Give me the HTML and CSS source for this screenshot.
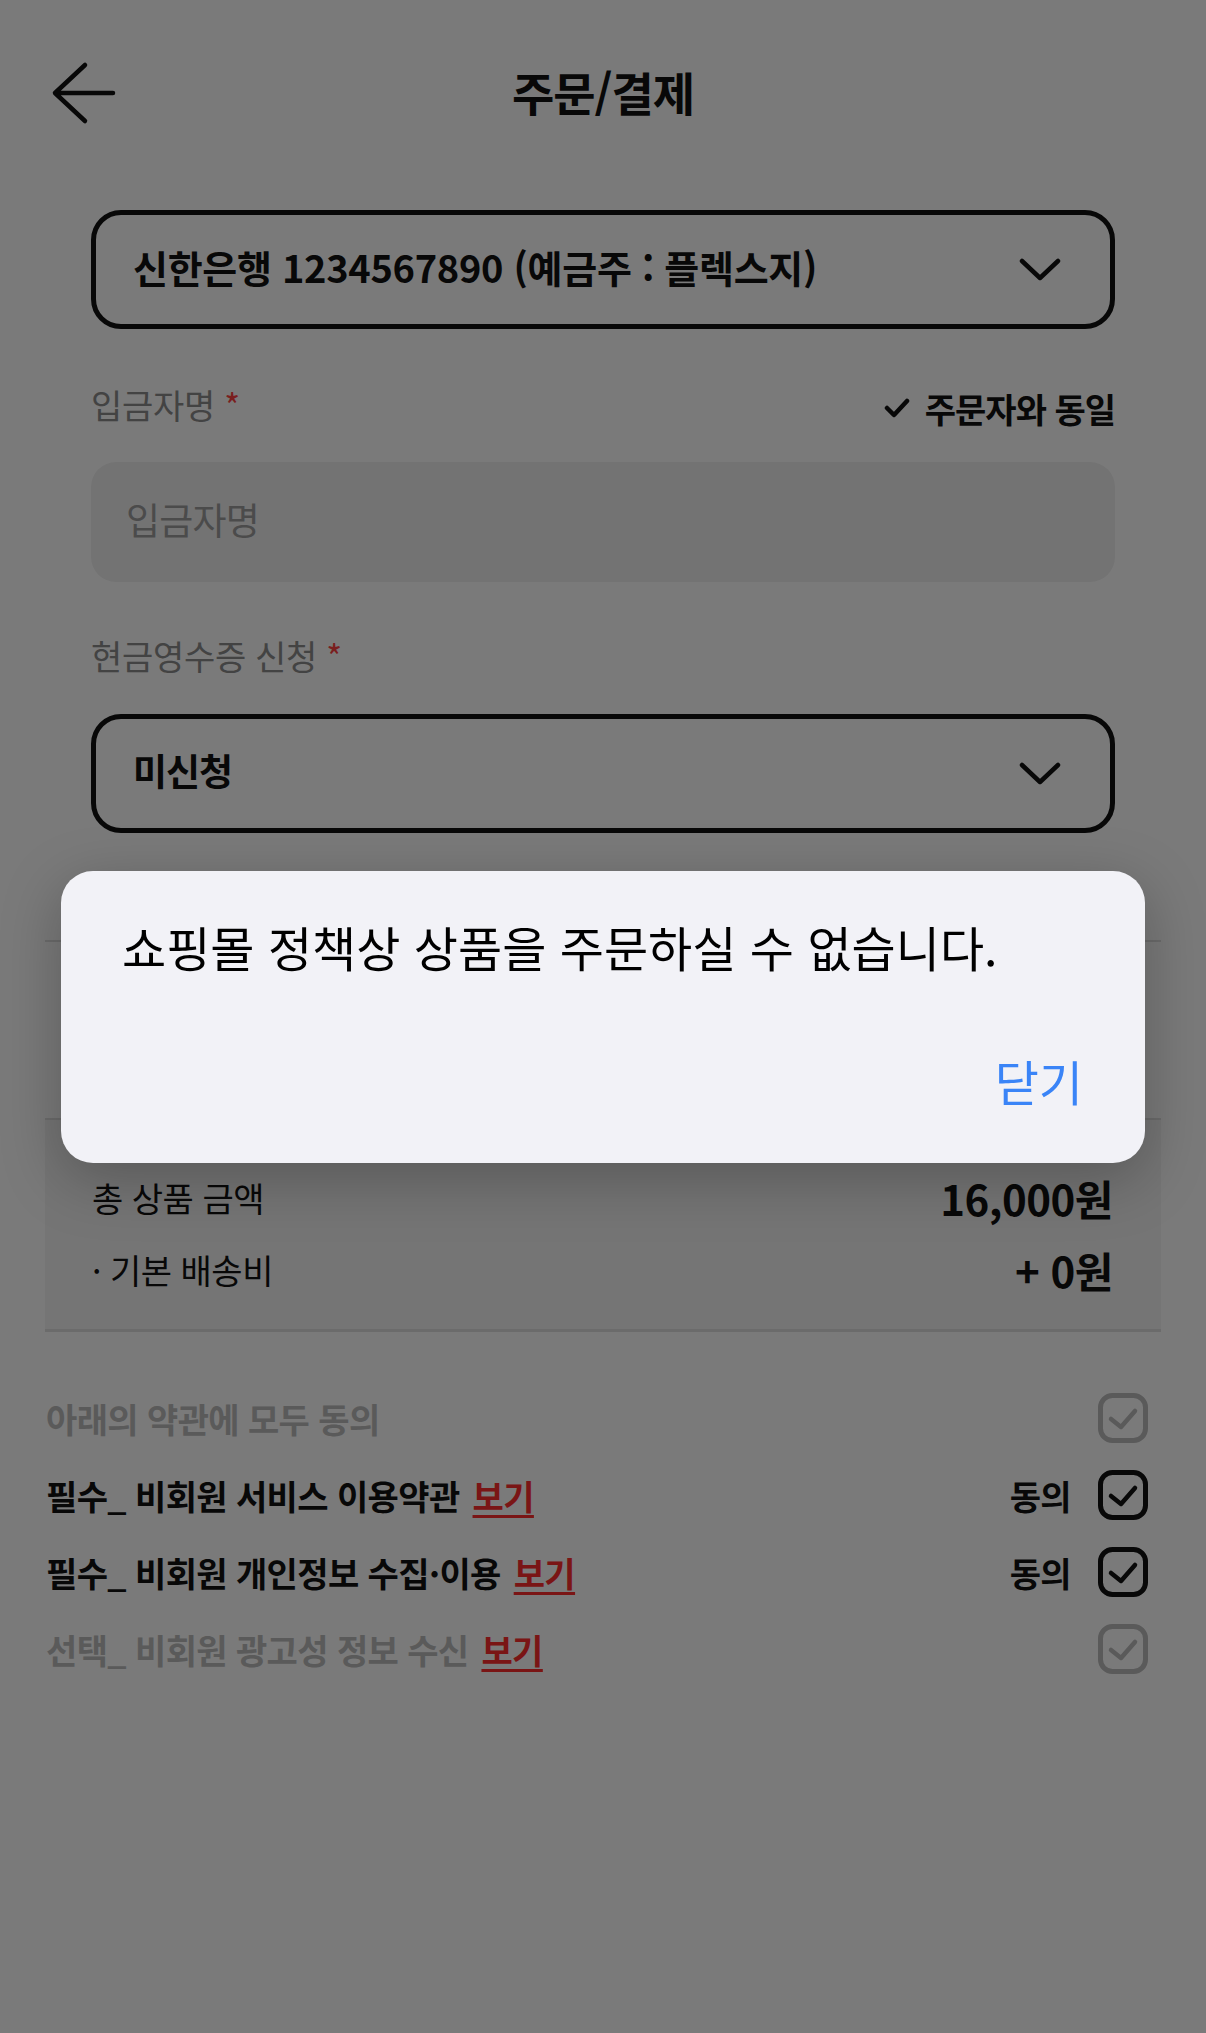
FILE: index.html
```html
<!DOCTYPE html>
<html lang="ko">
<head>
    <meta charset="UTF-8">
    <meta name="viewport" content="width=device-width, initial-scale=1.0">
    <title>주문/결제</title>
    <link rel="stylesheet" href="styles.css">
</head>
<body>

    <div class="page">
        <header class="topbar">
            <button class="back" aria-label="뒤로">
                <svg width="70" height="70" viewBox="0 0 70 70"><path d="M35 9 L5 37 L35 65 M5 37 H63"/></svg>
            </button>
            <h1>주문/결제</h1>
            <span></span>
        </header>

        <div class="form">
            <div class="select">
                <span>신한은행 1234567890 (예금주 : 플렉스지)</span>
                <svg class="chevron" width="42" height="24" viewBox="0 0 42 24"><path d="M3 3 L21 20 L39 3"/></svg>
            </div>

            <div class="label-row">
                <label for="depositor">입금자명 <em>*</em></label>
                <span class="same">
                    <svg width="26" height="22" viewBox="0 0 26 22"><path d="M3 11 L10 18 L23 4"/></svg>
                    주문자와 동일
                </span>
            </div>
            <input class="field" id="depositor" type="text" placeholder="입금자명">

            <div class="label-row second">
                <label>현금영수증 신청 <em>*</em></label>
            </div>
            <div class="select second">
                <span>미신청</span>
                <svg class="chevron" width="42" height="24" viewBox="0 0 42 24"><path d="M3 3 L21 20 L39 3"/></svg>
            </div>
        </div>

        <section class="pay">
            <div class="pay-head"></div>
            <div class="pay-rows">
                <div class="row"><span>총 상품 금액</span><strong>16,000원</strong></div>
                <div class="row"><span>· 기본 배송비</span><strong>+ 0원</strong></div>
            </div>
        </section>

        <section class="terms">
            <div class="term muted">
                <span>아래의 약관에 모두 동의</span>
                <svg class="box" width="50" height="50" viewBox="0 0 50 50"><rect x="2.5" y="2.5" width="45" height="45" rx="12"/><path d="M13 26 L23 34 L37 18"/></svg>
            </div>
            <div class="term">
                <span>필수_ 비회원 서비스 이용약관 <a href="#">보기</a></span>
                <span class="agree">동의
                    <svg class="box" width="50" height="50" viewBox="0 0 50 50"><rect x="2.5" y="2.5" width="45" height="45" rx="12"/><path d="M13 26 L23 34 L37 18"/></svg>
                </span>
            </div>
            <div class="term">
                <span>필수_ 비회원 개인정보 수집·이용 <a href="#">보기</a></span>
                <span class="agree">동의
                    <svg class="box" width="50" height="50" viewBox="0 0 50 50"><rect x="2.5" y="2.5" width="45" height="45" rx="12"/><path d="M13 26 L23 34 L37 18"/></svg>
                </span>
            </div>
            <div class="term muted">
                <span>선택_ 비회원 광고성 정보 수신 <a href="#">보기</a></span>
                <svg class="box" width="50" height="50" viewBox="0 0 50 50"><rect x="2.5" y="2.5" width="45" height="45" rx="12"/><path d="M13 26 L23 34 L37 18"/></svg>
            </div>
        </section>
    </div>

    <div class="dim"></div>

    <div class="alert" role="alertdialog">
        <p>쇼핑몰 정책상 상품을 주문하실 수 없습니다.</p>
        <button>닫기</button>
    </div>

</body>
</html>
```

FILE: styles.css
```css
* {
    box-sizing: border-box;
}

body {
    margin: 0;
    font-family: "Noto Sans CJK KR", "Noto Sans", sans-serif;
    color: #111;
    background: #fff;
}

.page {
    width: 1206px;
    min-height: 2033px;
    background: #fff;
}

/* top bar */
.topbar {
    height: 182px;
    display: grid;
    grid-template-columns: 1fr auto 1fr;
    align-items: center;
}

.back {
    margin-left: 50px;
    width: 70px;
    height: 70px;
    padding: 0;
    border: none;
    background: none;
    display: block;
}

.back path,
.chevron path,
.same path {
    fill: none;
    stroke: #111;
    stroke-width: 4.5;
    stroke-linecap: round;
    stroke-linejoin: round;
}

h1 {
    margin: 0;
    font-size: 46px;
    font-weight: 700;
    letter-spacing: -1px;
    line-height: 1;
}

/* form */
.form {
    padding: 28px 91px 0;
}

.select {
    height: 119px;
    border: 5px solid #111;
    border-radius: 30px;
    display: flex;
    align-items: center;
    justify-content: space-between;
    padding: 0 49px 0 37px;
    font-size: 38px;
    font-weight: 700;
    letter-spacing: -0.3px;
}

.select span {
    padding-bottom: 7px;
}

.select.second {
    margin-top: 30px;
    font-size: 37px;
    letter-spacing: -1px;
}

.label-row {
    margin-top: 54px;
    height: 50px;
    display: flex;
    align-items: center;
    justify-content: space-between;
}

.label-row.second {
    margin-top: 52px;
}

.label-row label {
    padding-bottom: 7px;
    font-size: 34px;
    color: #8c8c8c;
    letter-spacing: -0.3px;
}

.label-row em {
    font-style: normal;
    color: #ff4242;
}

.same {
    display: flex;
    align-items: center;
    gap: 15px;
    font-size: 34px;
    font-weight: 700;
    letter-spacing: -1px;
}

.field {
    display: block;
    width: 100%;
    height: 120px;
    margin-top: 29px;
    padding: 0 35px 7px;
    border: none;
    border-radius: 25px;
    background: #f1f1f1;
    font-family: inherit;
    font-size: 37px;
    letter-spacing: -0.8px;
    color: #111;
}

.field::placeholder {
    color: #9e9e9e;
}

/* payment summary */
.pay {
    margin: 107px 45px 0;
    border-top: 2px solid #e0e0e0;
}

.pay-head {
    height: 178px;
    border-bottom: 2px solid #e0e0e0;
}

.pay-rows {
    background: #f5f5f5;
    padding: 47px 48px 30px 47px;
    border-bottom: 3px solid #e0e0e0;
    display: flex;
    flex-direction: column;
    gap: 12px;
}

.row {
    height: 60px;
    display: flex;
    align-items: center;
    justify-content: space-between;
    font-size: 34px;
    letter-spacing: -0.5px;
}

.row strong {
    font-size: 42px;
    font-weight: 700;
    letter-spacing: -0.5px;
}

/* terms */
.terms {
    margin-top: 61px;
    padding: 0 58px 0 46px;
    display: flex;
    flex-direction: column;
    gap: 27px;
}

.term {
    height: 50px;
    display: flex;
    align-items: center;
    justify-content: space-between;
    font-size: 34px;
    font-weight: 700;
    letter-spacing: -0.6px;
}

.term a {
    margin-left: 4px;
    color: #ff2d2d;
    text-decoration: underline;
    text-decoration-thickness: 3px;
    text-underline-offset: 5px;
}

.agree {
    display: flex;
    align-items: center;
    gap: 27px;
}

.box rect,
.box path {
    fill: none;
    stroke: #111;
    stroke-width: 5;
    stroke-linecap: round;
    stroke-linejoin: round;
}

.box path {
    stroke-width: 4.5;
}

.term.muted {
    color: #bcbcbc;
}

.term.muted .box rect,
.term.muted .box path {
    stroke: #bcbcbc;
}

/* alert */
.dim {
    position: fixed;
    inset: 0;
    background: rgba(0, 0, 0, 0.52);
}

.alert {
    position: absolute;
    left: 61px;
    top: 871px;
    width: 1084px;
    height: 292px;
    border-radius: 32px;
    background: #f2f2f7;
    box-shadow: 0 16px 60px rgba(0, 0, 0, 0.25);
    padding: 45px 62px 53px 61px;
    display: flex;
    flex-direction: column;
}

.alert p {
    margin: 0;
    font-size: 48px;
    line-height: 60px;
    color: #000;
}

.alert button {
    align-self: flex-end;
    margin-top: auto;
    padding: 0;
    border: none;
    background: none;
    font-family: inherit;
    font-size: 48px;
    line-height: 60px;
    color: #3a84f7;
}
```
